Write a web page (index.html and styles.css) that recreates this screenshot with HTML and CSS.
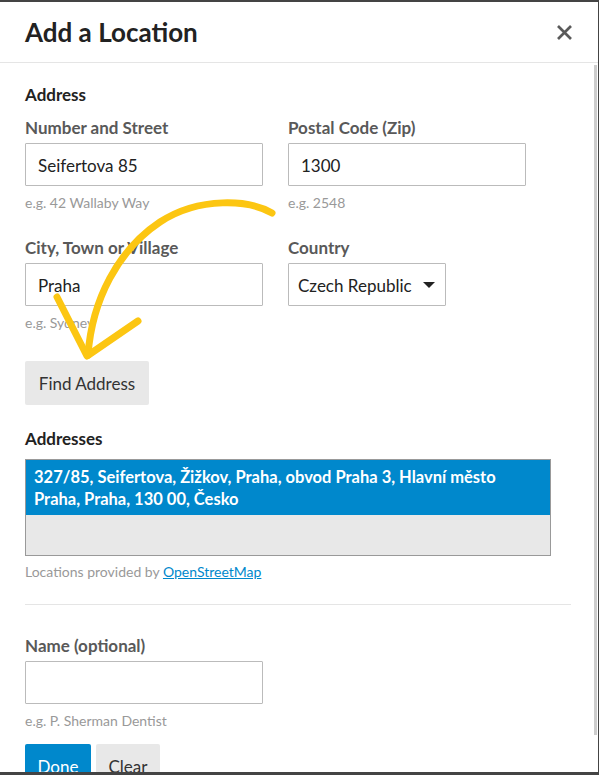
FILE: index.html
```html
<!DOCTYPE html>
<html lang="en">
<head>
<meta charset="utf-8">
<title>Add a Location</title>
<link rel="stylesheet" href="styles.css">
</head>
<body>
<div class="modal">
  <div class="header">
    <h1 class="title">Add a Location</h1>
    <button class="close" aria-label="Close">
      <svg width="17" height="17" viewBox="0 0 17 17"><path d="M2 2 L15 15 M15 2 L2 15" stroke="#5a5a5a" stroke-width="2.7" stroke-linecap="butt"/></svg>
    </button>
  </div>
  <div class="body">
    <h2 class="section">Address</h2>
    <div class="grid">
      <div class="field">
        <label class="label">Number and Street</label>
        <div class="input">Seifertova 85</div>
        <div class="help">e.g. 42 Wallaby Way</div>
      </div>
      <div class="field">
        <label class="label">Postal Code (Zip)</label>
        <div class="input">1300</div>
        <div class="help">e.g. 2548</div>
      </div>
      <div class="field">
        <label class="label">City, Town or Village</label>
        <div class="input">Praha</div>
        <div class="help">e.g. Sydney</div>
      </div>
      <div class="field">
        <label class="label">Country</label>
        <div class="select">Czech Republic <span class="caret"></span></div>
      </div>
    </div>
    <button class="btn btn-gray find">Find Address</button>
    <h2 class="section addresses">Addresses</h2>
    <div class="listbox">
      <div class="option selected">327/85, Seifertova, Žižkov, Praha, obvod Praha 3, Hlavní město Praha, Praha, 130 00, Česko</div>
    </div>
    <div class="help credit">Locations provided by <a href="#">OpenStreetMap</a></div>
    <hr class="divider">
    <div class="field name">
      <label class="label">Name (optional)</label>
      <div class="input wide"></div>
      <div class="help">e.g. P. Sherman Dentist</div>
    </div>
    <div class="actions">
      <button class="btn btn-blue">Done</button>
      <button class="btn btn-gray">Clear</button>
    </div>
  </div>
  <div class="scrollbar"></div>
  <svg class="arrow" width="300" height="380" viewBox="0 0 300 380">
    <path d="M272 213 C 250 200, 200 196, 160 222 C 118 250, 92 300, 88 355" fill="none" stroke="#fcc612" stroke-width="7" stroke-linecap="round"/>
    <path d="M57 297 L 87 356 L 138 321" fill="none" stroke="#fcc612" stroke-width="7" stroke-linecap="round" stroke-linejoin="round"/>
  </svg>
</div>
</body>
</html>
```
FILE: styles.css
```css
html, body {
  margin: 0;
  padding: 0;
}
body {
  background: #444;
  width: 599px;
  height: 775px;
  overflow: hidden;
  font-family: Lato, "Liberation Sans", sans-serif;
}
.modal {
  position: relative;
  margin-top: 2px;
  width: 598px;
  height: 770px;
  background: #fff;
  overflow: hidden;
}
.header {
  display: flex;
  align-items: center;
  justify-content: space-between;
  height: 60px;
  padding: 0 25px 0 25px;
  border-bottom: 1px solid #e5e5e5;
}
.title {
  margin: 0;
  font-size: 26px;
  font-weight: 700;
  color: #222;
  line-height: 1;
}
.close {
  border: 0;
  background: none;
  padding: 0;
  width: 17px;
  height: 17px;
  display: flex;
}
.body {
  padding: 21px 25px 0 25px;
}
.section {
  margin: 0;
  font-size: 17px;
  line-height: 22px;
  font-weight: 700;
  color: #222;
}
.grid {
  display: grid;
  grid-template-columns: 238px 238px;
  column-gap: 25px;
  row-gap: 24px;
  margin-top: 11px;
}
.field {
  display: flex;
  flex-direction: column;
  align-items: flex-start;
}
.label {
  font-size: 17px;
  line-height: 22px;
  font-weight: 700;
  color: #595959;
}
.input {
  box-sizing: border-box;
  margin-top: 4px;
  width: 238px;
  height: 43px;
  border: 1px solid #bbb;
  border-radius: 1px;
  padding: 1px 12px 0 12px;
  display: flex;
  align-items: center;
  font-size: 17px;
  color: #222;
}
.select {
  box-sizing: border-box;
  margin-top: 4px;
  width: 158px;
  height: 43px;
  border: 1px solid #bbb;
  border-radius: 1px;
  padding: 1px 10px 0 9px;
  display: flex;
  align-items: center;
  justify-content: space-between;
  font-size: 17px;
  color: #222;
}
.caret {
  width: 0;
  height: 0;
  border-left: 6px solid transparent;
  border-right: 6px solid transparent;
  border-top: 6px solid #222;
}
.help {
  margin-top: 7px;
  font-size: 14px;
  line-height: 20px;
  color: #999;
}
.btn {
  border: 0;
  border-radius: 2px;
  font-family: inherit;
  font-size: 17px;
  height: 44px;
  padding: 0 12px;
  cursor: pointer;
}
.btn-gray {
  background: #e8e8e8;
  color: #333;
}
.btn-blue {
  background: #0088cc;
  color: #fff;
}
.find {
  display: block;
  margin-top: 28px;
  width: 124px;
}
.addresses {
  margin-top: 23px;
}
.listbox {
  box-sizing: border-box;
  margin-top: 9px;
  width: 526px;
  height: 97px;
  border: 1px solid #999;
  background: #e8e8e8;
}
.option {
  font-size: 16.5px;
  line-height: 22px;
  padding: 6px 50px 5px 8px;
}
.selected {
  background: #0088cc;
  color: #fff;
  font-weight: 700;
}
.credit {
  margin-top: 6px;
}
.credit a {
  color: #0088cc;
}
.divider {
  margin: 22px 0 0 0;
  border: 0;
  border-top: 1px solid #e5e5e5;
  width: 546px;
}
.name {
  margin-top: 30px;
}
.actions {
  display: flex;
  gap: 5px;
  margin-top: 13px;
}
.actions .btn-blue {
  width: 66px;
}
.actions .btn-gray {
  width: 64px;
}
.scrollbar {
  position: absolute;
  right: 1px;
  top: 63px;
  width: 3px;
  height: 670px;
  background: #cdcdcd;
}
.arrow {
  position: absolute;
  left: 0;
  top: -2px;
  pointer-events: none;
}
```
